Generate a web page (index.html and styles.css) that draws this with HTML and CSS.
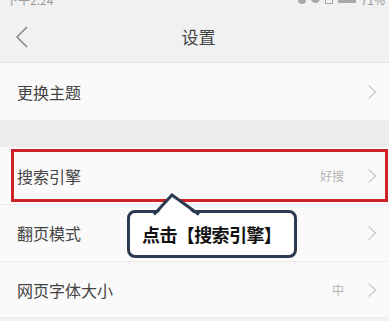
FILE: index.html
```html
<html lang="zh-CN">
<head>
    <meta charset="UTF-8">
    <meta name="viewport" content="width=device-width, initial-scale=1.0">
    <title>设置</title>
    <link rel="stylesheet" href="styles.css">
</head>
<body>
    <div class="status">
        <span class="time">下午2:24</span>
        <span class="icons">
            <i class="ico alarm"></i>
            <i class="ico wifi"></i>
            <i class="ico sim"></i>
            <i class="ico battery"></i>
            <span class="pct">71%</span>
        </span>
    </div>

    <div class="nav">
        <svg class="back" width="14" height="22" viewBox="0 0 14 22">
            <polyline points="12,1 2,11 12,21" fill="none" stroke="#8a8a8a" stroke-width="1.6"/>
        </svg>
        <div class="title">设置</div>
    </div>

    <div class="group">
        <div class="row">
            <span class="label">更换主题</span>
            <span class="arrow"></span>
        </div>
    </div>

    <div class="gap"></div>

    <div class="group">
        <div class="row highlight">
            <span class="label">搜索引擎</span>
            <span class="value">好搜</span>
            <span class="arrow"></span>
        </div>
        <div class="row line">
            <span class="label">翻页模式</span>
            <span class="arrow"></span>
        </div>
        <div class="row line">
            <span class="label">网页字体大小</span>
            <span class="value">中</span>
            <span class="arrow"></span>
        </div>
    </div>

    <div class="callout">
        <svg class="pointer" width="56" height="26" viewBox="0 0 56 26">
            <polygon points="5,26 22,4 48,26" fill="#fff"/>
            <polyline points="4,23.5 22,4 49,23.5" fill="none" stroke="#2c3a52" stroke-width="3" stroke-linejoin="miter"/>
        </svg>
        <div class="tip">点击【搜索引擎】</div>
    </div>
</body>
</html>
```

FILE: styles.css
```css
body {
    margin: 0;
    width: 389px;
    height: 321px;
    overflow: hidden;
    background-color: #f1f1f1;
    font-family: "Noto Sans CJK SC", "Noto Sans", sans-serif;
    color: #444;
    position: relative;
}

.status {
    height: 10px;
    overflow: hidden;
    display: flex;
    justify-content: space-between;
    padding: 0 4px 0 6px;
    color: #9a9a9a;
    font-size: 12px;
    line-height: 12px;
}

.status .time {
    margin-top: -6px;
}

.status .icons {
    display: flex;
    align-items: flex-start;
    gap: 5px;
    margin-top: -5px;
}

.ico {
    display: block;
    background-color: #a8a8a8;
}

.alarm {
    width: 8px;
    height: 9px;
    border-radius: 4px;
}

.wifi {
    width: 9px;
    height: 8px;
    border-radius: 0 0 5px 5px;
}

.sim {
    width: 8px;
    height: 9px;
    background: none;
    border: 1.5px solid #a8a8a8;
    box-sizing: border-box;
}

.battery {
    width: 18px;
    height: 8px;
}

.pct {
    margin-top: -1px;
}

.nav {
    height: 52px;
    display: flex;
    align-items: center;
    justify-content: center;
    position: relative;
    border-bottom: 1px solid #e3e3e3;
}

.nav .back {
    position: absolute;
    left: 15px;
    top: 16px;
}

.nav .title {
    font-size: 17px;
    color: #444;
    margin-left: 8px;
}

.group {
    background-color: #fafafa;
}

.row {
    height: 57px;
    display: flex;
    align-items: center;
    padding: 0 9px 0 17px;
    font-size: 16px;
    position: relative;
}

.row .label {
    flex: 1;
}

.row .value {
    font-size: 12px;
    color: #b2b2b2;
    margin-right: 20px;
}

.arrow {
    width: 9px;
    height: 9px;
    border-top: 1.3px solid #bdbdbd;
    border-right: 1.3px solid #bdbdbd;
    transform: rotate(45deg);
    margin-right: 6px;
}

.row.line {
    border-top: 1px solid #ebebeb;
    height: 56px;
}

.row.line:last-child {
    border-bottom: 1px solid #ebebeb;
    height: 55px;
}

.gap {
    height: 27px;
    background-color: #ececec;
}

.highlight::after {
    content: "";
    position: absolute;
    left: 11px;
    right: 1px;
    top: 2px;
    bottom: 2px;
    border: 3px solid #cf2229;
}

.callout {
    position: absolute;
    left: 127px;
    top: 210px;
    width: 170px;
    height: 48px;
    box-sizing: border-box;
    border: 3px solid #2c3a52;
    border-radius: 8px;
    background-color: #fff;
    display: flex;
    align-items: center;
    padding-left: 12px;
}

.callout .pointer {
    position: absolute;
    left: 20px;
    top: -22px;
}

.tip {
    font-size: 18px;
    font-weight: bold;
    color: #111;
    letter-spacing: -0.6px;
}
```
